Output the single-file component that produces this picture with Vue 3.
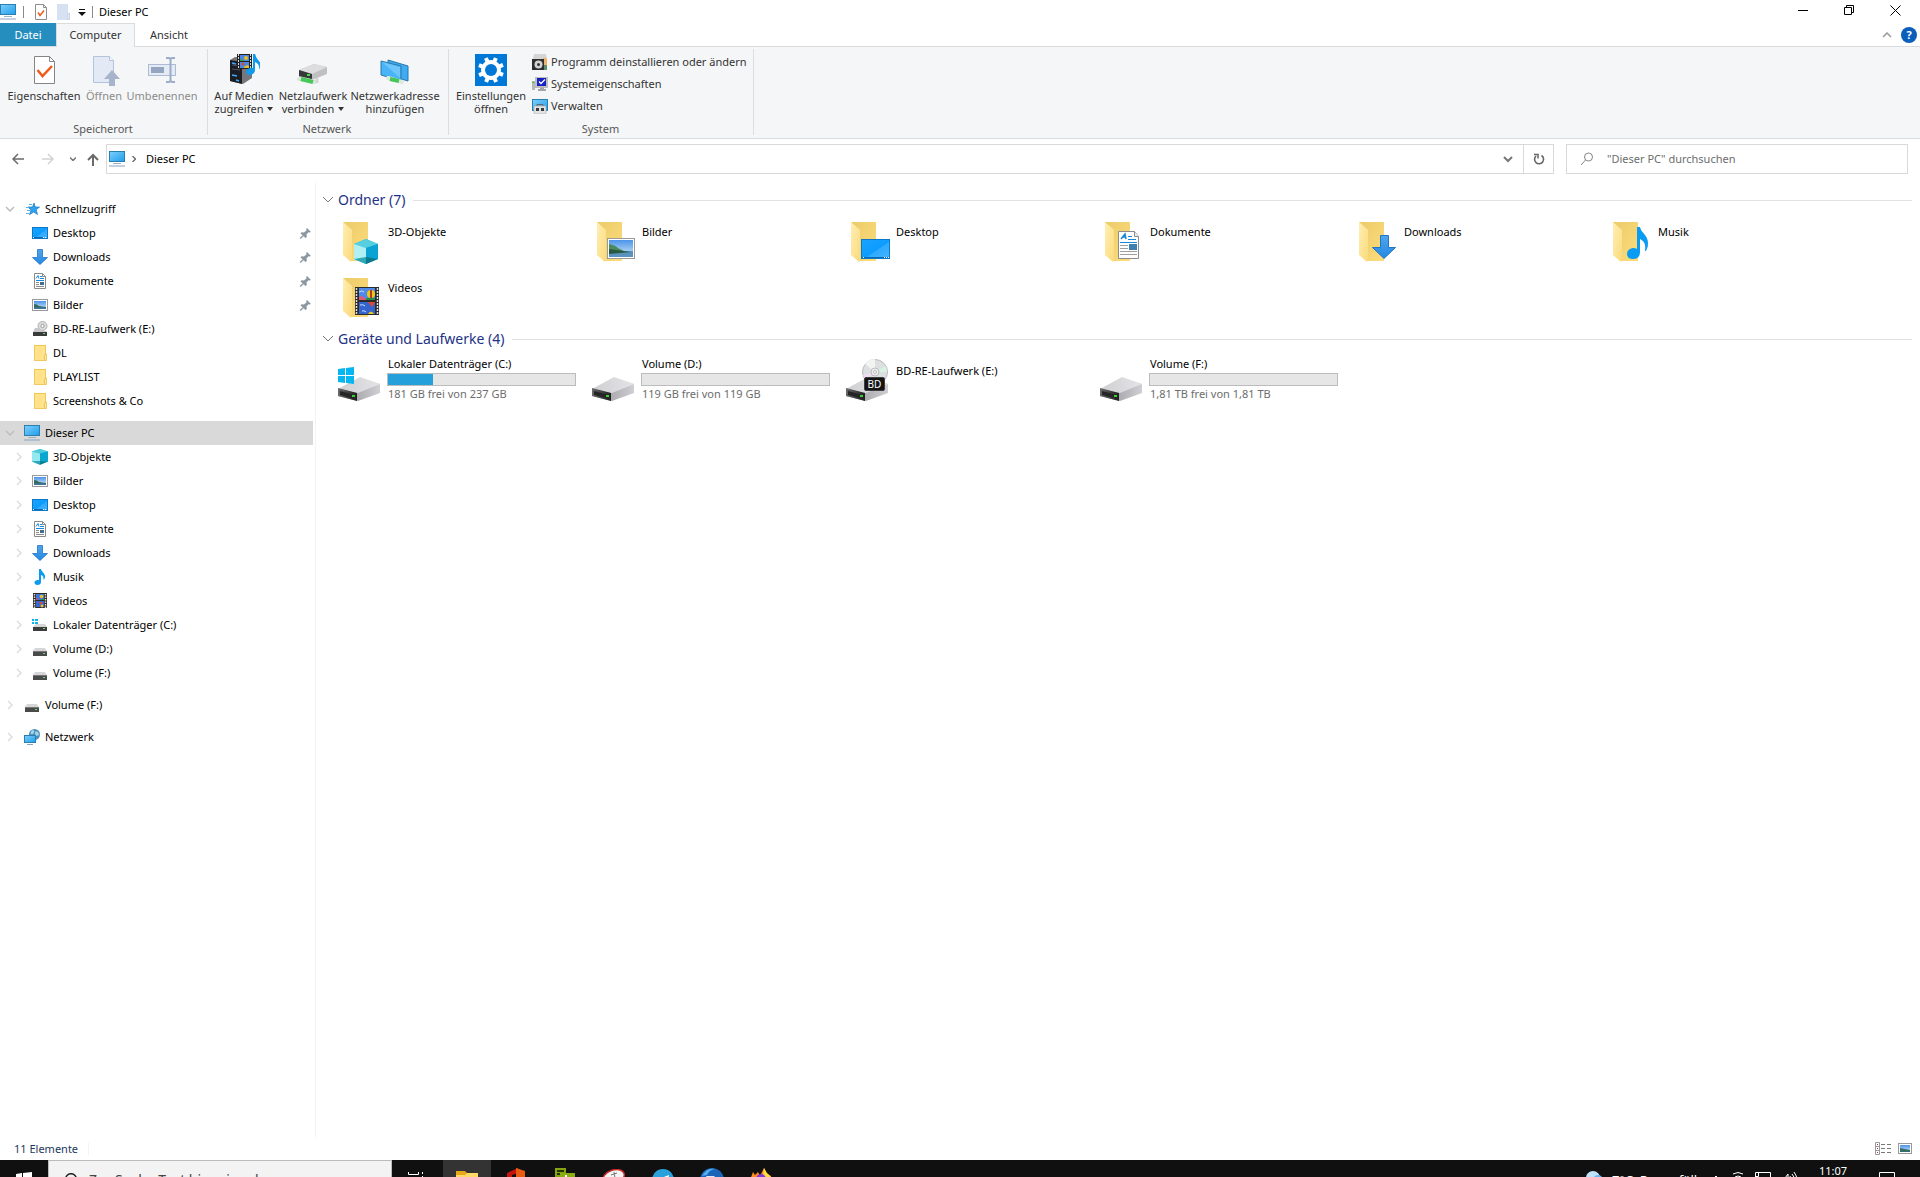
<script setup>
const ribbonStorage = [
  { label: ['Eigenschaften'], icon: 'props32', w: 'w80' },
  { label: ['Öffnen'], icon: 'open32', w: 'w40', off: true },
  { label: ['Umbenennen'], icon: 'rename32', w: 'w76', off: true },
]
const ribbonNetwork = [
  { label: ['Auf Medien', 'zugreifen'], icon: 'media32', w: 'w66', drop: true },
  { label: ['Netzlaufwerk', 'verbinden'], icon: 'netdrive32', w: 'w72', drop: true },
  { label: ['Netzwerkadresse', 'hinzufügen'], icon: 'netloc32', w: 'w92' },
]
const systemLinks = [
  { label: 'Programm deinstallieren oder ändern', icon: 'uninstall' },
  { label: 'Systemeigenschaften', icon: 'sysprops' },
  { label: 'Verwalten', icon: 'manage' },
]
const tree = [
  {
    label: 'Schnellzugriff', icon: 'star', open: true,
    children: [
      { label: 'Desktop', icon: 'desktop', pin: true },
      { label: 'Downloads', icon: 'download', pin: true },
      { label: 'Dokumente', icon: 'document', pin: true },
      { label: 'Bilder', icon: 'picture', pin: true },
      { label: 'BD-RE-Laufwerk (E:)', icon: 'bd' },
      { label: 'DL', icon: 'folder' },
      { label: 'PLAYLIST', icon: 'folder' },
      { label: 'Screenshots & Co', icon: 'folder' },
    ],
  },
  {
    label: 'Dieser PC', icon: 'pc', open: true, selected: true,
    children: [
      { label: '3D-Objekte', icon: 'cube', exp: true },
      { label: 'Bilder', icon: 'picture', exp: true },
      { label: 'Desktop', icon: 'desktop', exp: true },
      { label: 'Dokumente', icon: 'document', exp: true },
      { label: 'Downloads', icon: 'download', exp: true },
      { label: 'Musik', icon: 'music', exp: true },
      { label: 'Videos', icon: 'video', exp: true },
      { label: 'Lokaler Datenträger (C:)', icon: 'drivewin', exp: true },
      { label: 'Volume (D:)', icon: 'drive', exp: true },
      { label: 'Volume (F:)', icon: 'drive', exp: true },
    ],
  },
  { label: 'Volume (F:)', icon: 'drive', children: [] },
  { label: 'Netzwerk', icon: 'network', children: [] },
]
const folders = [
  { label: '3D-Objekte', over: 'o-cube' },
  { label: 'Bilder', over: 'o-picture' },
  { label: 'Desktop', over: 'o-desktop' },
  { label: 'Dokumente', over: 'o-document' },
  { label: 'Downloads', over: 'o-download' },
  { label: 'Musik', over: 'o-music' },
  { label: 'Videos', over: 'o-video' },
]
const drives = [
  { label: 'Lokaler Datenträger (C:)', used: 24, free: '181 GB frei von 237 GB', over: 'o-win' },
  { label: 'Volume (D:)', used: 0, free: '119 GB frei von 119 GB' },
  { label: 'BD-RE-Laufwerk (E:)', over: 'o-disc', badge: 'BD' },
  { label: 'Volume (F:)', used: 0, free: '1,81 TB frei von 1,81 TB' },
]
</script>

<template>
  <svg class="defs" aria-hidden="true">
    <defs>
      <linearGradient id="gScreen" x1="0" y1="0" x2="1" y2="1">
        <stop offset="0" stop-color="#7fd0fb" /><stop offset="1" stop-color="#1f9dec" />
      </linearGradient>
      <linearGradient id="gDesk" x1="0" y1="0" x2="1" y2="1">
        <stop offset="0" stop-color="#1aa3ff" /><stop offset=".55" stop-color="#0c9cff" /><stop offset=".56" stop-color="#2eaaff" /><stop offset="1" stop-color="#46b4ff" />
      </linearGradient>
      <linearGradient id="gBack" x1="0" y1="0" x2="1" y2="1">
        <stop offset="0" stop-color="#eccb6b" /><stop offset="1" stop-color="#fddc7c" />
      </linearGradient>
      <linearGradient id="gFront" x1="0" y1="0" x2="1" y2="1">
        <stop offset="0" stop-color="#ffefb4" /><stop offset="1" stop-color="#fbda7b" />
      </linearGradient>
      <linearGradient id="gTop" x1="0" y1="0" x2="1" y2="0">
        <stop offset="0" stop-color="#cfcfd1" /><stop offset="1" stop-color="#e4e4e8" />
      </linearGradient>
      <linearGradient id="gSide" x1="0" y1="0" x2="1" y2="0">
        <stop offset="0" stop-color="#8e8e92" /><stop offset="1" stop-color="#d0d0d4" />
      </linearGradient>
      <linearGradient id="gDark" x1="0" y1="0" x2="1" y2="0">
        <stop offset="0" stop-color="#6a6a6a" /><stop offset="1" stop-color="#1e1e1e" />
      </linearGradient>
      <linearGradient id="gSky" x1="0" y1="0" x2="0" y2="1">
        <stop offset="0" stop-color="#4b93ea" /><stop offset="1" stop-color="#d5ebf8" />
      </linearGradient>
      <linearGradient id="gArrow" x1="0" y1="0" x2="0" y2="1">
        <stop offset="0" stop-color="#4fa5ee" /><stop offset="1" stop-color="#2288e2" />
      </linearGradient>
    </defs>

    <!-- 16 px icons -->
    <symbol id="pc" viewBox="0 0 16 16">
      <rect x=".5" y=".5" width="15" height="10" fill="url(#gScreen)" stroke="#2b7fae" />
      <path d="M4 12.500h8" stroke="#9fb3c8" /><path d="M0 15h16" stroke="#8ba3bd" />
    </symbol>
    <symbol id="star" viewBox="0 0 16 16">
      <path d="M10 2l1.300 4 4.200.1-3.300 2.700 1.300 4.700-3.800-2.500-4.200 2.700 1.500-4.800L4 6h4.500z" fill="#2ea3ef" stroke="#1b77bd" stroke-width=".7" />
      <path d="M5 3.500h3M2 6.500h3M3 9.500h3M2 12.500h3" stroke="#59b0ea" />
    </symbol>
    <symbol id="desktop" viewBox="0 0 16 16">
      <rect x=".5" y="2.500" width="15" height="11" fill="url(#gDesk)" stroke="#0b78c9" />
      <path d="M2 12.500h9" stroke="#0b6cb5" /><path d="M1 12.500h1M11 12.500h1m1 0h1" stroke="#fff" />
    </symbol>
    <symbol id="download" viewBox="0 0 16 16">
      <path d="M5.500 .5h5v8h5L8 15.500.5 8.500h5z" fill="url(#gArrow)" stroke="#2374c4" stroke-width=".8" />
    </symbol>
    <symbol id="document" viewBox="0 0 16 16">
      <path d="M2.500.5h8l3 3v12h-11z" fill="#fff" stroke="#8a8a8a" /><path d="M10.500.5v3h3" fill="none" stroke="#8a8a8a" />
      <path d="M4 5.500l2-3 1 3M8 3.500h2M4 7.500h8M8 5.500h4" stroke="#1a86d6" fill="none" />
      <path d="M4 9.500h3M4 11.500h3M4 13.500h8" stroke="#8a8a8a" /><rect x="8" y="9" width="4" height="3" fill="#3f6f8f" />
    </symbol>
    <symbol id="picture" viewBox="0 0 16 16">
      <rect x=".5" y="2.500" width="15" height="11" fill="#fff" stroke="#9a9a9a" />
      <rect x="2" y="4" width="12" height="8" fill="url(#gSky)" />
      <path d="M2 7q3 0 5 2l7 1v2H2z" fill="#386a5a" /><path d="M2 10.500h12V12H2z" fill="#3f77a5" />
    </symbol>
    <symbol id="bd" viewBox="0 0 16 16">
      <circle cx="10.500" cy="5" r="4.500" fill="#dcdcdc" stroke="#9a9a9a" stroke-width=".7" /><circle cx="10.500" cy="5" r="1.600" fill="#fff" stroke="#8a8a8a" stroke-width=".8" />
      <path d="M3 7h4l2 3h5l1 1H1z" fill="#c8c8ca" /><rect x="1" y="11" width="14" height="4" fill="#3a3a3c" /><rect x="11" y="12" width="2" height="1" fill="#4fe04f" />
    </symbol>
    <symbol id="folder" viewBox="0 0 16 16">
      <rect x="2.500" y=".5" width="11" height="15" fill="#ffe28a" stroke="#efcb5c" /><path d="M12.500 15.500V10l2-1v6.500z" fill="#fde79d" stroke="#e8c04c" stroke-width=".8" />
    </symbol>
    <symbol id="cube" viewBox="0 0 16 16">
      <path d="M8 0l8 2.500v10L8 15.700 0 12.500v-10z" fill="#12b5cf" /><path d="M8 0l8 2.500-8 2-8-2z" fill="#4ecbdc" />
      <path d="M0 2.500l8 2V12l-8 .5z" fill="#94e8ef" /><path d="M8 4.500l8-2v10L8 12z" fill="#0ca6cf" /><path d="M0 12.500L8 12v3.700z" fill="#2aa8b6" /><path d="M8 12l8 .5-8 3.200z" fill="#0a7f94" />
    </symbol>
    <symbol id="music" viewBox="0 0 16 16">
      <path d="M7 0h2c.5 3 4 4 4 7.500 0 1.500-.5 2.500-1.500 3.500.5-3-1-4.500-2.500-5v7c0 2-1.500 3-3.500 3S2.500 15 2.500 13.500s1.700-2.700 4.500-2.300z" fill="#0a9bf0" />
    </symbol>
    <symbol id="video" viewBox="0 0 16 16">
      <rect x="1" y="0" width="14" height="15" fill="#2b2b2b" /><path d="M2.500 1v14M13.500 1v14" stroke="#ddd" stroke-width="1.500" stroke-dasharray="1.500 1" />
      <rect x="4" y="1" width="8" height="6" fill="#3f78dd" /><rect x="4" y="8" width="8" height="6" fill="#3767c8" />
      <circle cx="9.500" cy="3.500" r="1.800" fill="#eec01c" /><path d="M4 5l3 1-3 1z" fill="#e04848" /><path d="M7 9h4l-2 3z" fill="#e04848" /><path d="M9 6h3v1H9z" fill="#1f9a3a" /><circle cx="10" cy="13" r="1.400" fill="#eec01c" />
    </symbol>
    <symbol id="drive" viewBox="0 0 16 16">
      <path d="M3 7h10l2 3.500H1z" fill="#d6d6d9" /><rect x="1" y="10" width="14" height="5" fill="#4a4a4c" /><path d="M1 10.500h14" stroke="#777" /><rect x="11" y="12" width="2" height="1" fill="#5fe65f" />
    </symbol>
    <symbol id="drivewin" viewBox="0 0 16 16">
      <path d="M4 7h9l2 3H1z" fill="#d6d6d9" /><rect x="1" y="10" width="14" height="4" fill="#3c3c3e" /><rect x="11" y="11" width="2" height="1" fill="#5fe65f" />
      <path d="M0 2h2v2H0zM3 2h3v2H3zM0 5h2v2H0zM3 5h3v2H3z" fill="#0cb4ef" />
    </symbol>
    <symbol id="network" viewBox="0 0 16 16">
      <circle cx="10.500" cy="5.500" r="5.500" fill="#4a8fb8" /><path d="M8 1q3 0 2 3-2 2-3 1t1-4M12 2q3 1 3 4l-3 1q-2-3 0-5" fill="#a3d2ea" />
      <rect x=".5" y="6.500" width="11" height="7" fill="url(#gScreen)" stroke="#2b7fae" /><path d="M3 15.500h6" stroke="#8ba3bd" />
    </symbol>
    <symbol id="props" viewBox="0 0 16 16">
      <path d="M2.500.5h8l3 3v12h-11z" fill="#fff" stroke="#8d8d8d" /><path d="M10.500.5v3h3" fill="none" stroke="#8d8d8d" /><path d="M5 8.500l2 3 4-5" fill="none" stroke="#ee5a1c" stroke-width="1.500" />
    </symbol>
    <symbol id="newfolder" viewBox="0 0 16 16">
      <path d="M2 0h11v9l2 0v7H2z" fill="#d6e1f2" /><path d="M12.500 15.500V10l2-1v6.500z" fill="#e6edf8" stroke="#c3d1e6" stroke-width=".8" />
    </symbol>
    <symbol id="uninstall" viewBox="0 0 16 16">
      <path d="M2 0h12l1 5H1z" fill="#d5d5d5" /><path d="M11 4q3-1 4 1v7h-4z" fill="#f0b26a" /><path d="M12 11h3v5h-3z" fill="#5d8f6d" /><rect x="0" y="5" width="12" height="11" fill="#2e2e2e" />
      <circle cx="6.500" cy="10.500" r="4" fill="#d3d3d3" /><circle cx="6.500" cy="10.500" r="1.500" fill="#333" />
    </symbol>
    <symbol id="sysprops" viewBox="0 0 16 16">
      <rect x="0" y="5" width="3" height="9" fill="#b7b7b7" /><path d="M0 6.500h2" stroke="#3fbf3f" /><rect x="3" y="1" width="13" height="11" fill="#bdbdbd" /><rect x="5" y="2" width="9" height="8" fill="#1620c4" /><path d="M7 5.500l2 2 4-4" stroke="#fff" fill="none" stroke-width="1.300" /><path d="M6 14h8M8 12.500h4" stroke="#a5a5a5" stroke-width="2" />
    </symbol>
    <symbol id="manage" viewBox="0 0 16 16">
      <rect x=".5" y="1.500" width="15" height="11" fill="url(#gScreen)" stroke="#2b7fae" /><path d="M5 8V6.500h6V8" fill="none" stroke="#666" /><rect x="2" y="8" width="12" height="8" rx="1" fill="#e2e2e2" stroke="#aaa" stroke-width=".6" /><path d="M4 11.500h3M9 11.500h3" stroke="#3b3b3b" stroke-width="3" />
    </symbol>
    <symbol id="pin" viewBox="0 0 16 16">
      <path d="M10 3l4 4-1.500.6-1-.4L9.500 9.500l.3 2.500-1.300 1L3.500 8.500l1-1.200 2.500.2 2.500-2.300-.3-1.200z" fill="#8b98a2" /><path d="M6.500 10.500L3 13.500" stroke="#8b98a2" stroke-width="1.400" />
    </symbol>

    <!-- 32 px ribbon icons -->
    <symbol id="props32" viewBox="0 0 32 32">
      <path d="M6.500 2.500h15l5 5v22h-20z" fill="#fff" stroke="#858585" /><path d="M21.500 2.500v5h5" fill="none" stroke="#858585" /><path d="M9.500 16l5 6L24 12" fill="none" stroke="#f05a1a" stroke-width="2.500" />
    </symbol>
    <symbol id="open32" viewBox="0 0 32 32">
      <path d="M5.500 2.500h16l4 4v22h-20z" fill="#e3eaf6" stroke="#b4c3dc" /><path d="M21.500 2.500v4h4" fill="#f7faff" stroke="#b4c3dc" /><path d="M24 16l8 9h-5v7h-6v-7h-5z" fill="#a7b4cb" />
    </symbol>
    <symbol id="rename32" viewBox="0 0 32 32">
      <rect x="2.500" y="10.500" width="27" height="11" fill="#e4ebf5" stroke="#adbcd4" /><rect x="5" y="13" width="13" height="6" fill="#96a6c2" /><path d="M20 4h2.500q2 0 2 2v20q0 2-2 2H20M29 4h-2.500q-2 0-2 2v20q0 2 2 2H29" fill="none" stroke="#9cacc8" stroke-width="2" />
    </symbol>
    <symbol id="media32" viewBox="0 0 32 32">
      <path d="M2 6l5-3 17 1v20l-9 6-13-3z" fill="#75777a" /><path d="M2 6l12 2v22L2 27z" fill="#1b1d22" /><path d="M4 11l8 1M4 15l8 1" stroke="#4b5260" /><path d="M4 9l4 1M4 21l5 1M8 26l3 1" stroke="#3fa7ff" stroke-width="1.500" />
      <rect x="9" y="0" width="15" height="15" fill="#222" /><path d="M10.500 0v15M22.500 0v15" stroke="#ddd" stroke-dasharray="2 1" /><rect x="12" y="1" width="9" height="6" fill="#4c88e0" /><rect x="12" y="8" width="9" height="6" fill="#4c88e0" />
      <circle cx="18" cy="4" r="2" fill="#e9c024" /><path d="M12 5l5 2h-5z" fill="#38a13c" /><circle cx="15" cy="10" r="1.500" fill="#da473b" /><path d="M16 13q3-3 5-1v2h-5z" fill="#e9c024" />
      <path d="M25 0h2q1 4 4 7t0 9q1-6-4-8v8q0 4-5 5-4 0-4-3t4-4q2-1 3 0z" fill="#119aec" />
    </symbol>
    <symbol id="netdrive32" viewBox="0 0 32 32">
      <path d="M2 16L17 10l13 3v7l-15 6-13-3z" fill="#c0c0c2" /><path d="M2 16L17 10l13 3-15 7z" fill="#dddddf" /><path d="M2 16l13 4v5L2 22z" fill="#353738" /><path d="M10 21h3" stroke="#47db47" stroke-width="2" /><path d="M2 25l16 3" stroke="#d9e7da" stroke-width="4" stroke-linecap="round" /><path d="M4 25l12 3" stroke="#47c858" stroke-width="4" /><path d="M20 24v5" stroke="#d5d5d5" stroke-width="3" />
    </symbol>
    <symbol id="netloc32" viewBox="0 0 32 32">
      <path d="M9 6l20 6v15L9 21z" fill="#3facf2" stroke="#2a77a8" /><path d="M2 7l20 5v15L2 21z" fill="#49b4f7" stroke="#2a77a8" /><path d="M3 8l18 5v11z" fill="#6ec5fa" /><path d="M9 24l14 4" stroke="#dceadf" stroke-width="4" stroke-linecap="round" /><path d="M11 25l9 2" stroke="#46c658" stroke-width="4" />
    </symbol>
    <symbol id="gear32" viewBox="0 0 32 32">
      <rect width="32" height="32" fill="#0078d7" />
      <g fill="#fff" transform="rotate(22 16 16)"><rect x="14" y="3" width="4" height="26" /><rect x="14" y="3" width="4" height="26" transform="rotate(45 16 16)" /><rect x="14" y="3" width="4" height="26" transform="rotate(90 16 16)" /><rect x="14" y="3" width="4" height="26" transform="rotate(135 16 16)" /><circle cx="16" cy="16" r="10" /></g>
      <circle cx="16" cy="16" r="6" fill="#0078d7" />
    </symbol>

    <!-- 48 px tile icons -->
    <symbol id="bigfolder" viewBox="0 0 48 48">
      <path d="M9 6h25v39H18z" fill="#000" opacity=".04" /><path d="M9 6h25v39H16z" fill="url(#gBack)" /><path d="M9 6l9 8v28l-1 4-8-7z" fill="url(#gFront)" />
    </symbol>
    <symbol id="o-cube" viewBox="0 0 48 48">
      <path d="M32 23l12 5v15l-12 5-12-5V28z" fill="#12b5cf" /><path d="M32 23l12 5-12 4-12-4z" fill="#57cfe0" /><path d="M20 28l12 4v10l-12 2z" fill="#b0f0f5" /><path d="M32 32l12-4v15l-12-1z" fill="#0aa3d4" /><path d="M20 43l12-2v7z" fill="#2fa8b5" /><path d="M32 41l12 2-12 5z" fill="#0a7a8c" />
    </symbol>
    <symbol id="o-picture" viewBox="0 0 48 48">
      <rect x="19.500" y="22.500" width="27" height="20" fill="#fff" stroke="#9a9a9a" /><rect x="21" y="24" width="24" height="17" fill="url(#gSky)" /><path d="M21 28q6 1 9 4l6 3H21z" fill="#4a8a5c" /><path d="M21 35h24v6H21z" fill="#5b93c0" /><path d="M21 33l22 3-22 2z" fill="#28583f" />
    </symbol>
    <symbol id="o-desktop" viewBox="0 0 48 48">
      <rect x="19.500" y="23.500" width="28" height="19" fill="url(#gDesk)" stroke="#0b78c9" /><path d="M20 41.500h27" stroke="#0b6cb5" /><path d="M21 41.500h1m20 0h1m1 0h1m1 0h1" stroke="#fff" />
    </symbol>
    <symbol id="o-document" viewBox="0 0 48 48">
      <path d="M22.500 15.500h16l4 5v22h-20z" fill="#fff" stroke="#8c8c8c" /><path d="M38.500 15.500v5h4" fill="#eee" stroke="#8c8c8c" /><path d="M25 23l4-5 1 5M26 21h3" fill="none" stroke="#1a86d6" stroke-width="1.500" /><path d="M32 20.500h4M32 23.500h8M24 26.500h17" stroke="#1a86d6" /><path d="M24 29.500h8M24 32.500h8M24 35.500h17M24 38.500h17" stroke="#a0a0a0" /><rect x="33" y="28" width="8" height="6" fill="#3d7fb0" />
    </symbol>
    <symbol id="o-download" viewBox="0 0 48 48">
      <path d="M30.500 19.500h8v12h7L34 42.500l-11.500-11h8z" fill="url(#gArrow)" stroke="#2374c4" />
    </symbol>
    <symbol id="o-music" viewBox="0 0 48 48">
      <path d="M33 11h3c1 6 8 8 8 16 0 4-1 6-2 8l-1 0c1-7-1-10-5-12v13q0 7-7 7-6 0-6-5t6-6q3 0 4 1z" fill="#0a9cf2" />
    </symbol>
    <symbol id="o-video" viewBox="0 0 48 48">
      <rect x="21" y="15" width="24" height="28" fill="#2b2b2b" /><path d="M22.500 16v27M43.500 16v27" stroke="#ddd" stroke-width="1.500" stroke-dasharray="2 1" /><rect x="25" y="16" width="16" height="12" fill="#4f8ae8" /><rect x="25" y="30" width="16" height="12" fill="#3565cc" />
      <path d="M25 25l3-1 5 4h-8z" fill="#e25872" /><circle cx="37" cy="22" r="4" fill="#f0c814" /><path d="M37 18v8" stroke="#b03a1a" stroke-width="2" /><path d="M32 26h9v2h-9z" fill="#229044" /><path d="M34 30h7l-3 5z" fill="#e04830" /><path d="M34 42q3-5 6 0z" fill="#f0c814" /><path d="M25 20q3-2 5 0M26 33q3-1 5 1M28 39q2-1 4 1" fill="none" stroke="#cfe0ff" />
    </symbol>
    <symbol id="bigdrive" viewBox="0 0 48 48">
      <path d="M4 34L26 22l20 6v9L24 45 4 40z" fill="url(#gSide)" /><path d="M4 33L26 21l20 7-22 9z" fill="url(#gTop)" /><path d="M4 32l19 5v8L4 40z" fill="url(#gDark)" /><path d="M6 35l15 4v4L6 39z" fill="#252525" /><path d="M18 40h3" stroke="#35d135" stroke-width="2" />
    </symbol>
    <symbol id="o-win" viewBox="0 0 48 48">
      <path d="M4 13l7-1v7H4zM12 12l8-1v8h-8zM4 20h7v7l-7-1zM12 20h8v8l-8-1z" fill="#06b6f0" />
    </symbol>
    <symbol id="o-disc" viewBox="0 0 48 48">
      <circle cx="33" cy="16" r="12.500" fill="#dde0e0" stroke="#bcbcbc" /><path d="M33 16L23 8q4-5 10-5z" fill="#f0f5f2" /><path d="M33 16l11-6 1 6z" fill="#d8f2e4" /><path d="M33 16l-12 3 2 5z" fill="#f1dcf3" /><circle cx="33" cy="16" r="4" fill="#eee" stroke="#bbb" /><circle cx="33" cy="16" r="1.500" fill="#fff" stroke="#bbb" />
    </symbol>
  </svg>

  <div class="screen">
    <header class="titlebar">
      <svg class="i16"><use href="#pc" /></svg>
      <span class="tsep"></span>
      <button class="plain" aria-label="Eigenschaften"><svg class="i16"><use href="#props" /></svg></button>
      <button class="plain" aria-label="Neuer Ordner"><svg class="i16"><use href="#newfolder" /></svg></button>
      <button class="plain" aria-label="Schnellzugriff anpassen"><svg class="qat" viewBox="0 0 8 8"><path d="M1 1.500h6" stroke="#111" /><path d="M0 4h8L4 8z" fill="#111" /></svg></button>
      <span class="tsep last"></span>
      <h1>Dieser PC</h1>
      <div class="winctl">
        <button class="plain" aria-label="Minimieren"><svg viewBox="0 0 11 11"><path d="M0 5.500h10" stroke="#000" /></svg></button>
        <button class="plain" aria-label="Verkleinern"><svg viewBox="0 0 11 11"><path d="M.5 2.500h7v7h-7zM2.500 2.500v-2h7v7h-2" fill="none" stroke="#000" /></svg></button>
        <button class="plain" aria-label="Schließen"><svg viewBox="0 0 11 11"><path d="M.5.5l10 10M10.500.5l-10 10" stroke="#000" /></svg></button>
      </div>
    </header>

    <nav class="tabs">
      <button class="tab file">Datei</button>
      <button class="tab active">Computer</button>
      <button class="tab">Ansicht</button>
      <div class="tabs-end">
        <button class="plain" aria-label="Menüband minimieren"><svg width="10" height="6" viewBox="0 0 10 6"><path d="M1 5l4-4 4 4" fill="none" stroke="#9a9a9a" stroke-width="1.500" /></svg></button>
        <button class="help" aria-label="Hilfe">?</button>
      </div>
    </nav>

    <section class="ribbon">
      <div class="group g1">
        <div class="items">
          <button v-for="b in ribbonStorage" :key="b.icon" class="big" :class="[b.w, { off: b.off }]">
            <svg class="i32"><use :href="'#' + b.icon" /></svg>
            <span v-for="l in b.label" :key="l">{{ l }}</span>
          </button>
        </div>
        <h2>Speicherort</h2>
      </div>
      <div class="group g2">
        <div class="items">
          <button v-for="b in ribbonNetwork" :key="b.icon" class="big" :class="b.w">
            <svg class="i32"><use :href="'#' + b.icon" /></svg>
            <span>{{ b.label[0] }}</span>
            <span>{{ b.label[1] }}<i v-if="b.drop" class="caret"></i></span>
          </button>
        </div>
        <h2>Netzwerk</h2>
      </div>
      <div class="group g3">
        <div class="items">
          <button class="big w76">
            <svg class="i32"><use href="#gear32" /></svg>
            <span>Einstellungen</span><span>öffnen</span>
          </button>
          <div class="stack">
            <button v-for="s in systemLinks" :key="s.icon" class="small">
              <svg class="i16"><use :href="'#' + s.icon" /></svg>{{ s.label }}
            </button>
          </div>
        </div>
        <h2>System</h2>
      </div>
    </section>

    <section class="addressrow">
      <div class="navbtns">
        <button class="plain" aria-label="Zurück"><svg width="12" height="12" viewBox="0 0 12 12"><path d="M12 6H1M6 1L1 6l5 5" fill="none" stroke="#6b6b6b" stroke-width="1.500" /></svg></button>
        <button class="plain" aria-label="Vorwärts"><svg width="12" height="12" viewBox="0 0 12 12"><path d="M0 6h11M6 1l5 5-5 5" fill="none" stroke="#d2d2d2" stroke-width="1.500" /></svg></button>
        <button class="plain narrow" aria-label="Verlauf"><svg width="6" height="4" viewBox="0 0 6 4"><path d="M0 .5l3 3 3-3" fill="none" stroke="#777" stroke-width="1.500" /></svg></button>
        <button class="plain narrow" aria-label="Nach oben"><svg width="12" height="13" viewBox="0 0 12 13"><path d="M6 13V2M1 7l5-5 5 5" fill="none" stroke="#6b6b6b" stroke-width="2" /></svg></button>
      </div>
      <div class="address">
        <svg class="i16"><use href="#pc" /></svg>
        <svg class="crumb" width="4" height="6" viewBox="0 0 4 6"><path d="M.5 0l3 3-3 3" fill="none" stroke="#666" stroke-width="1.300" /></svg>
        <span>Dieser PC</span>
        <button class="plain drop" aria-label="Vorherige Orte"><svg width="10" height="7" viewBox="0 0 10 7"><path d="M1 1l4 4 4-4" fill="none" stroke="#777" stroke-width="2" /></svg></button>
        <button class="plain refresh" aria-label="Aktualisieren"><svg width="12" height="12" viewBox="0 0 12 12"><path d="M8.500 2.500A4.500 4.500 0 1 1 3 3" fill="none" stroke="#666" stroke-width="1.600" /><path d="M1 1.500h4v4" fill="none" stroke="#666" stroke-width="1.500" /></svg></button>
      </div>
      <label class="search">
        <svg width="14" height="14" viewBox="0 0 14 14"><circle cx="8.500" cy="5" r="4" fill="none" stroke="#858585" /><path d="M5.500 8L1 13" stroke="#858585" /></svg>
        <input type="text" placeholder="&quot;Dieser PC&quot; durchsuchen" aria-label="Dieser PC durchsuchen" />
      </label>
    </section>

    <main class="body">
      <aside class="tree">
        <div v-for="(n, i) in tree" :key="i" class="branch">
          <div class="row" :class="{ selected: n.selected }">
            <svg v-if="n.open" class="chev" viewBox="0 0 10 10"><path d="M1 3l4 4 4-4" fill="none" stroke="#bdbdbd" stroke-width="1.500" /></svg>
            <svg v-else class="chev" viewBox="0 0 10 10"><path d="M3 1l4 4-4 4" fill="none" stroke="#dedede" stroke-width="1.500" /></svg>
            <svg class="i16"><use :href="'#' + n.icon" /></svg>
            <span>{{ n.label }}</span>
          </div>
          <div v-for="c in n.children" :key="c.label" class="row child">
            <svg class="chev" viewBox="0 0 10 10"><path v-if="c.exp" d="M4 1l4 4-4 4" fill="none" stroke="#dedede" stroke-width="1.500" /></svg>
            <svg class="i16"><use :href="'#' + c.icon" /></svg>
            <span>{{ c.label }}</span>
            <svg v-if="c.pin" class="i16 pin"><use href="#pin" /></svg>
          </div>
        </div>
      </aside>

      <section class="content">
        <div class="heading">
          <svg width="12" height="8" viewBox="0 0 12 8"><path d="M1 1l5 5 5-5" fill="none" stroke="#777" /></svg>
          <h2>Ordner (7)</h2><hr />
        </div>
        <div class="tiles folders">
          <div v-for="f in folders" :key="f.label" class="tile">
            <svg class="i48" viewBox="0 0 48 48"><use href="#bigfolder" /><use :href="'#' + f.over" /></svg>
            <span class="name">{{ f.label }}</span>
          </div>
        </div>
        <div class="heading">
          <svg width="12" height="8" viewBox="0 0 12 8"><path d="M1 1l5 5 5-5" fill="none" stroke="#777" /></svg>
          <h2>Geräte und Laufwerke (4)</h2><hr />
        </div>
        <div class="tiles drives">
          <div v-for="d in drives" :key="d.label" class="tile">
            <svg class="i48" viewBox="0 0 48 48"><use href="#bigdrive" /><use v-if="d.over" :href="'#' + d.over" /></svg>
            <span v-if="d.badge" class="badge">{{ d.badge }}</span>
            <div v-if="d.free" class="info">
              <span>{{ d.label }}</span>
              <div class="bar"><div class="fill" :style="{ width: d.used + '%' }"></div></div>
              <span class="free">{{ d.free }}</span>
            </div>
            <span v-else class="name">{{ d.label }}</span>
          </div>
        </div>
      </section>
    </main>

    <footer class="status">
      <span>11 Elemente</span>
      <div class="views">
        <button class="plain" aria-label="Details"><svg width="16" height="13" viewBox="0 0 16 13"><path d="M.5.5h4v12h-4zM.5 4.500h4M.5 8.500h4" fill="#fff" stroke="#999" /><path d="M2 2.500h1M2 6.500h1M2 10.500h1" stroke="#a33" /><path d="M6 2.500h4m2 0h4M6 6.500h4m2 0h4M6 10.500h4m2 0h4" stroke="#777" /></svg></button>
        <button class="plain" aria-label="Große Symbole"><svg width="14" height="11" viewBox="0 0 14 11"><rect x=".5" y=".5" width="13" height="10" fill="#fff" stroke="#999" /><rect x="2" y="2" width="10" height="7" fill="url(#gSky)" /><path d="M2 5l10 2v2H2z" fill="#356d6a" /></svg></button>
      </div>
    </footer>

    <div class="taskclip">
      <div class="taskbar">
        <button class="tb start" aria-label="Start"><svg width="16" height="16" viewBox="0 0 16 16"><path d="M0 2l6-1v6H0zM7 1l9-1v7H7zM0 8h6v7l-6-1zM7 8h9v8l-9-1z" fill="#fff" /></svg></button>
        <label class="tsearch">
          <svg width="15" height="15" viewBox="0 0 15 15"><circle cx="8" cy="6" r="5.300" fill="none" stroke="#222" stroke-width="1.500" /><path d="M4 10l-4 5" stroke="#222" stroke-width="1.500" /></svg>
          <input type="text" placeholder="Zur Suche Text hier eingeben" aria-label="Suche" />
        </label>
        <button class="tb view" aria-label="Aktive Anwendungen"><svg width="16" height="16" viewBox="0 0 16 16"><path d="M.5 0v2.500h10V0M14.500 0v2M14.500 4v10M0 5.500h11v6H.5V5" fill="none" stroke="#fff" /></svg></button>
        <button class="tb on" aria-label="Explorer"><svg width="22" height="20" viewBox="0 0 22 20"><path d="M0 1h9l2 2h11v15H0z" fill="#e8a71a" /><path d="M0 5h9l2-2h11v15H0z" fill="#ffd968" /></svg></button>
        <button class="tb app" aria-label="Office"><svg width="20" height="24" viewBox="0 0 20 24"><path d="M1 5L12 0v5L6 7v10l-5 2z" fill="#c6130c" /><path d="M10 0l9 3v18l-9 3z" fill="#ea5b12" /></svg></button>
        <button class="tb app" aria-label="Greenshot"><svg width="22" height="24" viewBox="0 0 22 24"><path d="M1 0h11v6h-3v12H1z" fill="#84a411" /><path d="M3 3h7M3 6h4" stroke="#243000" stroke-width="2" /><rect x="6" y="5" width="15" height="14" fill="#8aad12" /><path d="M12 7v6" stroke="#fff" stroke-width="2" /></svg></button>
        <button class="tb app" aria-label="Werkzeug"><svg width="22" height="22" viewBox="0 0 22 22"><ellipse cx="11" cy="8" rx="11" ry="7" fill="#f4f4f4" stroke="#c62a2a" stroke-width="1.500" transform="rotate(-20 11 9)" /><path d="M8 6l6-2M11 3l1 6" stroke="#777" /></svg></button>
        <button class="tb app" aria-label="Telegram"><svg width="22" height="22" viewBox="0 0 22 22"><circle cx="11" cy="11" r="11" fill="#2aa0dc" /><path d="M4 11l13-5-2 11-4-3-2 2v-4z" fill="#fff" /></svg></button>
        <button class="tb app" aria-label="Thunderbird"><svg width="24" height="24" viewBox="0 0 24 24"><circle cx="12" cy="12" r="12" fill="#1b64b8" /><path d="M2 8q5-9 13-7-6 1-8 6z" fill="#55b0ef" /><path d="M6 8l8 0 6 6-8 5z" fill="#dfeaf6" /></svg></button>
        <button class="tb app" aria-label="Firefox"><svg width="24" height="24" viewBox="0 0 24 24"><path d="M1 12l3-8 2 3 3-3 2 4 4-8 2 5 5 3 1 8q0 7-11 8Q0 22 1 12z" fill="#ff8a1c" /><path d="M15 0l3 5 5 5v5l-9-8z" fill="#ffdf3e" /><circle cx="12" cy="11" r="5" fill="#8238d6" /></svg></button>
        <div class="tray">
          <svg width="20" height="18" viewBox="0 0 20 18"><circle cx="8" cy="7" r="7" fill="#bfe3fb" /><circle cx="13" cy="9" r="5" fill="#69b4ee" /><circle cx="5" cy="11" r="5" fill="#e6f4fe" /></svg>
          <span class="weather">7°C&nbsp; Regenfälle</span>
          <svg width="10" height="16" viewBox="0 0 10 16"><path d="M1 8l4-4 4 4" fill="none" stroke="#fff" /></svg>
          <svg width="12" height="16" viewBox="0 0 12 16"><path d="M1 2q5-3 10 0M3 5q3-2 6 0" fill="none" stroke="#fff" /></svg>
          <svg width="16" height="16" viewBox="0 0 16 16"><path d="M.5.500h15v11H.5zM3.500 .5v4H.5" fill="none" stroke="#fff" /></svg>
          <svg width="16" height="16" viewBox="0 0 16 16"><path d="M0 6h3l3-4v12l-3-4H0zM8 4q3 4 0 8M10 2q5 6 0 12M12 0q6 8 0 16" fill="none" stroke="#fff" /></svg>
          <time>11:07</time>
          <svg width="16" height="16" viewBox="0 0 16 16"><path d="M.5.5h15v11h-6l-3 3v-3h-6z" fill="none" stroke="#fff" /></svg>
        </div>
      </div>
    </div>
  </div>
</template>

<style>
body { margin: 0; }
</style>

<style scoped>
.defs { position: absolute; width: 0; height: 0; }
.screen {
  display: flex; flex-direction: column; min-height: 100vh; overflow: hidden;
  background: #fff; color: #000; font: 11px/16px "Noto Sans", "Open Sans", sans-serif;
}
button, input { font: inherit; color: inherit; border: 0; padding: 0; margin: 0; background: none; }
h1, h2 { margin: 0; font: inherit; }
svg { display: block; flex: none; }
.i16 { width: 16px; height: 16px; }
.i32 { width: 32px; height: 32px; }
.i48 { width: 48px; height: 48px; }
.plain { display: flex; align-items: center; justify-content: center; }

.titlebar { display: flex; align-items: center; height: 23px; gap: 6px; }
.tsep { width: 1px; height: 12px; margin: 0 3px 0 1px; background: #8a8a8a; }
.tsep.last { margin: 0; }
.qat { width: 8px; height: 8px; margin-left: 1px; }
.winctl { display: flex; margin-left: auto; padding-right: 2px; align-self: flex-start; }
.winctl button { width: 46px; height: 20px; }
.winctl svg { width: 11px; height: 11px; }

.tabs { display: flex; height: 24px; border-bottom: 1px solid #dadbdc; box-sizing: border-box; }
.tab { width: 68px; height: 23px; color: #333; white-space: nowrap; }
.tab.file { width: 56px; background: #268dbf; color: #fff; }
.tab.active { width: 79px; height: 24px; background: #f5f6f7; border: 1px solid #dadbdc; border-bottom: 0; padding-bottom: 2px; }
.tabs-end { display: flex; align-items: center; gap: 9px; margin-left: auto; padding-right: 3px; }
.help { width: 16px; height: 16px; border-radius: 8px; background: #0a5fb8; color: #fff; font-weight: 700; line-height: 16px; }

.ribbon { display: flex; height: 91px; background: #f5f6f7; border-bottom: 1px solid #dadbdc; color: #333; }
.group { display: flex; flex-direction: column; margin: 2px 0 3px; box-sizing: border-box; border-right: 1px solid #dcdddf; }
.g1 { width: 208px; padding-left: 4px; }
.g2 { width: 241px; padding-left: 3px; }
.g3 { width: 305px; padding-left: 4px; }
.items { display: flex; flex: 1; }
.group h2 { padding-right: 5px; text-align: center; line-height: 12px; color: #555; }
.big { display: flex; flex-direction: column; align-items: center; justify-content: flex-start; padding-top: 5px; line-height: 13px; white-space: nowrap; }
.big svg { margin-bottom: 3px; }
.big.off { color: #8b8b8b; }
.caret { display: inline-block; margin-left: 4px; border: 3px solid transparent; border-top: 4px solid #333; border-bottom: 0; vertical-align: 2px; }
.w80 { width: 80px; } .w40 { width: 40px; } .w76 { width: 76px; } .w66 { width: 66px; } .w72 { width: 72px; } .w92 { width: 92px; }
.stack { display: flex; flex-direction: column; gap: 6px; padding: 5px 0 0 3px; }
.small { display: flex; align-items: center; gap: 3px; height: 16px; white-space: nowrap; }

.addressrow { display: flex; height: 30px; padding: 5px 12px 5px 0; }
.navbtns { display: flex; width: 106px; padding-left: 3px; box-sizing: border-box; }
.navbtns button { width: 30px; }
.navbtns .narrow { width: 20px; }
.address { display: flex; flex: 1; align-items: center; border: 1px solid #d9d9d9; box-sizing: border-box; padding-left: 2px; }
.crumb { margin: 0 10px 0 7px; }
.drop { margin-left: auto; width: 30px; height: 28px; }
.refresh { width: 30px; height: 28px; border-left: 1px solid #d9d9d9; }
.search { display: flex; align-items: center; width: 342px; margin-left: 12px; border: 1px solid #d9d9d9; box-sizing: border-box; padding-left: 13px; }
.search input { flex: 1; min-width: 0; margin-left: 13px; outline: 0; }
.search input::placeholder { color: #6d6d6d; opacity: 1; }

.body { display: flex; flex: 1; padding-top: 4px; }
.tree { width: 315px; border-right: 1px solid #f3f3f3; padding-top: 14px; box-sizing: content-box; }
.branch { margin-bottom: 8px; }
.row { display: flex; align-items: center; height: 24px; width: 313px; box-sizing: border-box; padding-left: 5px; }
.row.child { padding-left: 13px; }
.row.selected { background: #d9d9d9; }
.row span { margin-left: 5px; }
.chev { width: 10px; height: 10px; margin-right: 9px; }
.pin { margin: 0 0 0 auto; }

.content { flex: 1; min-width: 0; padding: 6px 8px 0 6px; }
.heading { display: flex; align-items: center; height: 22px; gap: 4px; color: #1e3287; }
.heading h2 { font-size: 14px; line-height: 22px; white-space: nowrap; }
.heading hr { flex: 1; margin: 0 0 0 4px; border: 0; height: 1px; background: #e2e2e2; }
.tiles { display: grid; grid-template-columns: repeat(auto-fill, 254px); padding-left: 12px; }
.folders { padding-top: 5px; grid-auto-rows: 56px; }
.drives { padding-top: 6px; grid-auto-rows: 56px; }
.tile { display: flex; position: relative; }
.name { margin: 8px 0 0 6px; }
.drives .name { margin-top: 7px; }
.badge {
  position: absolute; left: 22px; top: 21px; width: 21px; height: 14px; box-sizing: border-box;
  border: 1px solid #3f3f3f; border-radius: 2px; background: #141414; color: #fff;
  font-size: 10px; line-height: 12px; text-align: center;
}
.info { display: flex; flex-direction: column; width: 189px; margin-left: 5px; }
.info span { margin-left: 1px; }
.bar { height: 13px; margin-top: 1px; box-sizing: border-box; border: 1px solid #bcbcbc; background: #e6e6e6; }
.fill { height: 11px; background: #26a0da; }
.info .free { color: #6d6d6d; }

.status { display: flex; align-items: center; justify-content: space-between; height: 23px; padding: 0 8px 0 14px; color: #1e395b; }
.status span { padding-right: 10px; border-right: 1px solid #f3f3f3; line-height: 12px; }
.views { display: flex; gap: 7px; align-items: center; }

.taskclip { height: 17px; overflow: hidden; background: #101010; }
.taskbar { display: flex; height: 40px; color: #fff; }
.tb { display: flex; align-items: center; justify-content: center; width: 48px; height: 40px; }
.tb.view { width: 51px; padding-right: 4px; box-sizing: border-box; }
.tb.on { background: #333; }
.tb.app { width: 49px; }
.tsearch { display: flex; align-items: center; width: 344px; height: 40px; box-sizing: border-box; border: 1px solid #bbb; background: #f3f3f3; padding-left: 14px; }
.tsearch input { flex: 1; min-width: 0; margin-left: 11px; font-size: 14px; outline: 0; }
.tsearch input::placeholder { color: #444; opacity: 1; }
.tray { display: flex; align-items: center; gap: 11px; margin-left: auto; padding-right: 25px; }
.weather { font-size: 13px; width: 88px; margin-left: -4px; white-space: nowrap; }
.tray time { align-self: flex-start; margin: 3px 21px 0 10px; }
</style>
